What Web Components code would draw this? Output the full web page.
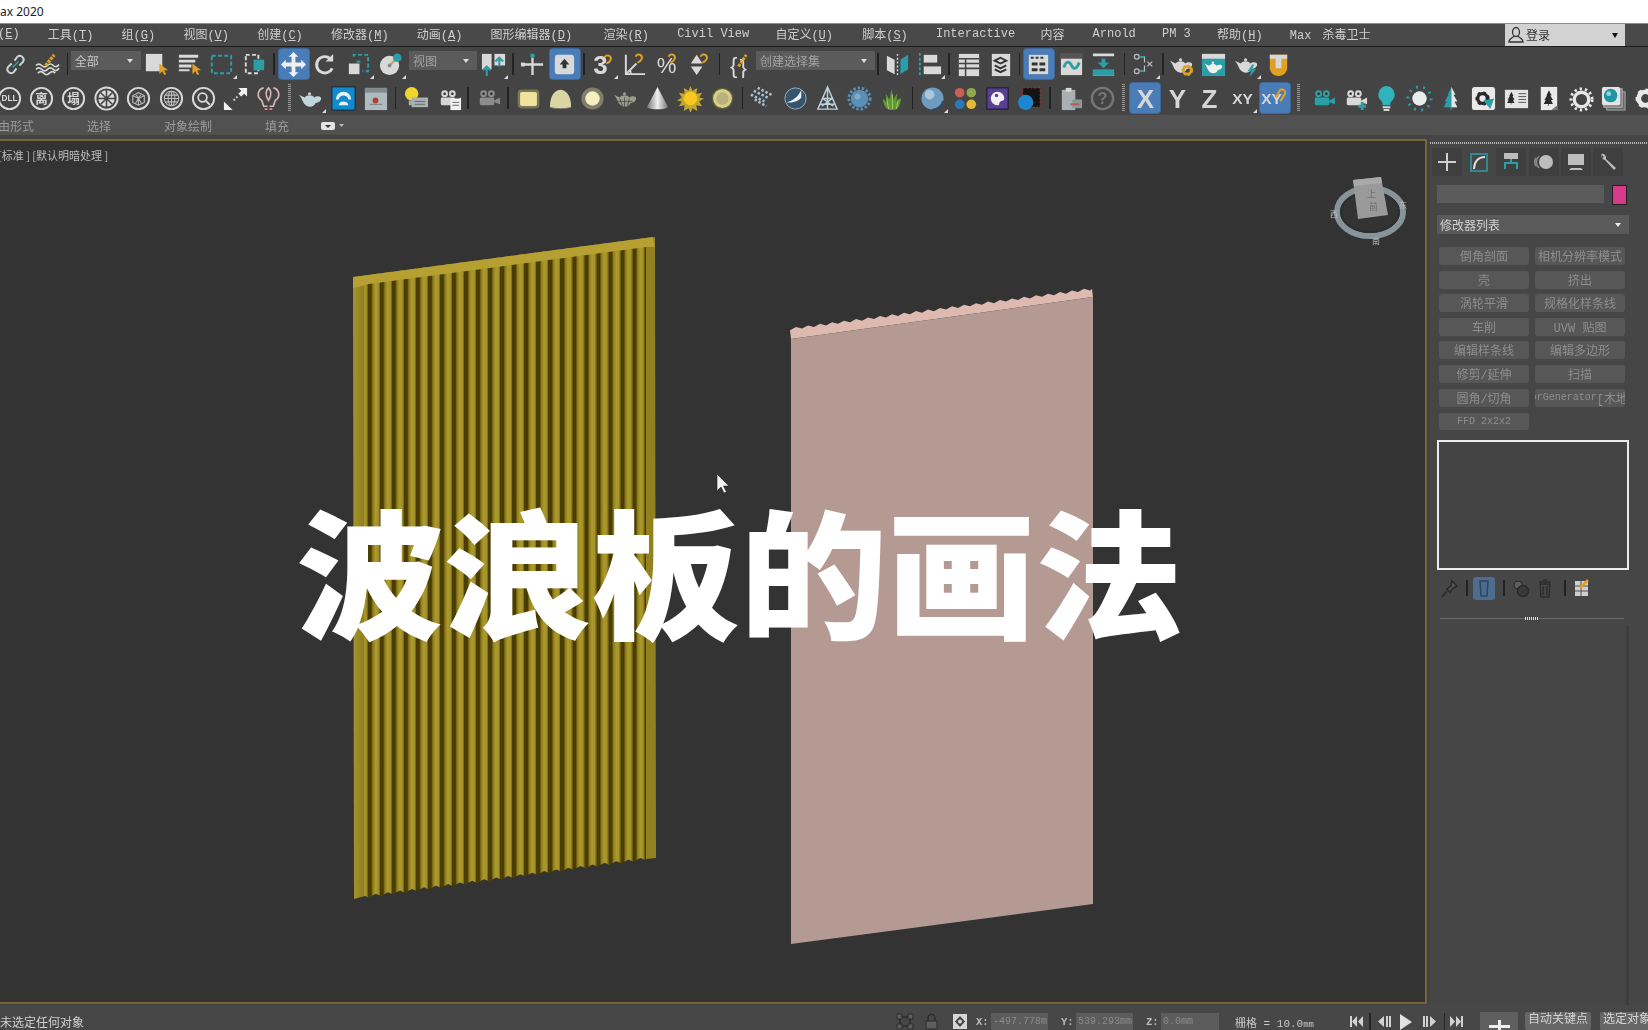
<!DOCTYPE html>
<html lang="zh">
<head>
<meta charset="utf-8">
<title>3ds Max 2020</title>
<style>
  html, body { margin: 0; height: 100%; overflow: hidden; background: #444; }
  body { font: 12px "Liberation Mono", "Noto Sans CJK SC", monospace; color: #ccc; }
  u { text-underline-offset: 1px; }
</style>
</head>
<body>
<max-app>
  <max-titlebar>ax 2020</max-titlebar>
  <max-menubar>
    <menu-item style="margin-left:-2px">(<u>E</u>)</menu-item>
    <menu-item>工具(<u>T</u>)</menu-item>
    <menu-item>组(<u>G</u>)</menu-item>
    <menu-item>视图(<u>V</u>)</menu-item>
    <menu-item>创建(<u>C</u>)</menu-item>
    <menu-item>修改器(<u>M</u>)</menu-item>
    <menu-item>动画(<u>A</u>)</menu-item>
    <menu-item>图形编辑器(<u>D</u>)</menu-item>
    <menu-item style="margin-left:3px">渲染(<u>R</u>)</menu-item>
    <menu-item>Civil View</menu-item>
    <menu-item style="margin-left:-2px">自定义(<u>U</u>)</menu-item>
    <menu-item style="margin-left:1px">脚本(<u>S</u>)</menu-item>
    <menu-item>Interactive</menu-item>
    <menu-item style="margin-left:-3px">内容</menu-item>
    <menu-item>Arnold</menu-item>
    <menu-item style="margin-left:-2px">PM 3</menu-item>
    <menu-item style="margin-left:-2px">帮助(<u>H</u>)</menu-item>
    <menu-item style="margin-left:-1px;word-spacing:4px">Max 杀毒卫士</menu-item>
    <login-box slot="end">登录</login-box>
  </max-menubar>
  <max-toolbar>
    <tool-row style="margin-left:-1px">
      <tool-icon n="link"></tool-icon><tool-icon n="wave"></tool-icon><tool-sep w="7"></tool-sep>
      <tool-combo w="70">全部</tool-combo>
      <tool-icon n="select"></tool-icon><tool-icon n="byname"></tool-icon><tool-icon n="region" fly></tool-icon><tool-icon n="crossing"></tool-icon><tool-sep w="7"></tool-sep>
      <tool-icon n="move" active></tool-icon><tool-icon n="rotate"></tool-icon><tool-icon n="scale" fly></tool-icon><tool-icon n="place" fly></tool-icon><tool-sep w="2" blank></tool-sep>
      <tool-combo w="68" dim>视图</tool-combo>
      <tool-icon n="pivot" fly></tool-icon><tool-sep w="7"></tool-sep>
      <tool-icon n="manip"></tool-icon><tool-icon n="key" active></tool-icon><tool-sep w="6"></tool-sep>
      <tool-icon n="snap" fly></tool-icon><tool-icon n="angle"></tool-icon><tool-icon n="percent"></tool-icon><tool-icon n="spin"></tool-icon><tool-sep w="6"></tool-sep>
      <tool-icon n="brace"></tool-icon><tool-sep w="1" blank></tool-sep>
      <tool-combo w="119" dim>创建选择集</tool-combo><tool-sep w="6"></tool-sep>
      <tool-icon n="mirror"></tool-icon><tool-icon n="align" fly></tool-icon><tool-sep w="6"></tool-sep>
      <tool-icon n="table"></tool-icon><tool-icon n="layers"></tool-icon><tool-sep w="6"></tool-sep>
      <tool-icon n="ribbon" active></tool-icon><tool-icon n="curve"></tool-icon><tool-icon n="schem"></tool-icon><tool-sep w="9"></tool-sep>
      <tool-icon n="nodes" fly></tool-icon><tool-sep w="4"></tool-sep>
      <tool-icon n="potgear"></tool-icon><tool-icon n="potwin"></tool-icon><tool-icon n="potbolt" fly></tool-icon><tool-icon n="ubadge"></tool-icon>
    </tool-row>
    <tool-row style="margin-left:-7px">
      <tool-icon n="dll"></tool-icon><tool-icon n="li"></tool-icon><tool-icon n="ta"></tool-icon><tool-icon n="wheel"></tool-icon><tool-icon n="mesh"></tool-icon><tool-icon n="globe"></tool-icon><tool-icon n="search"></tool-icon><tool-icon n="diag"></tool-icon><tool-icon n="bulbs"></tool-icon><tool-sep w="10" dots></tool-sep>
      <tool-icon n="pot" fly></tool-icon><tool-icon n="bluebox"></tool-icon><tool-icon n="redwin"></tool-icon><tool-sep w="8"></tool-sep>
      <tool-icon n="lamp"></tool-icon><tool-icon n="camdoc"></tool-icon><tool-sep w="7"></tool-sep>
      <tool-icon n="camgray"></tool-icon><tool-sep w="8"></tool-sep>
      <tool-icon n="ybox"></tool-icon><tool-icon n="dome"></tool-icon><tool-icon n="glow"></tool-icon><tool-icon n="potwire"></tool-icon><tool-icon n="cone"></tool-icon><tool-icon n="sun"></tool-icon><tool-icon n="olive"></tool-icon><tool-sep w="8"></tool-sep>
      <tool-icon n="grid"></tool-icon><tool-icon n="swoosh"></tool-icon><tool-icon n="tower"></tool-icon><tool-icon n="spiky"></tool-icon><tool-icon n="plant"></tool-icon><tool-sep w="8"></tool-sep>
      <tool-icon n="sphere" fly></tool-icon><tool-icon n="four"></tool-icon><tool-icon n="palette"></tool-icon><tool-icon n="redball"></tool-icon><tool-sep w="8"></tool-sep>
      <tool-icon n="clip"></tool-icon><tool-icon n="help"></tool-icon><tool-sep w="10" dots></tool-sep>
      <tool-icon n="x" active></tool-icon><tool-icon n="y"></tool-icon><tool-icon n="z"></tool-icon><tool-icon n="xy" fly></tool-icon><tool-icon n="xym" active></tool-icon><tool-sep w="15" dots></tool-sep>
      <tool-icon n="camt"></tool-icon><tool-icon n="camplus"></tool-icon><tool-icon n="bulbt"></tool-icon><tool-icon n="sunt"></tool-icon><tool-icon n="tree"></tool-icon><tool-icon n="gearcard"></tool-icon><tool-icon n="treecard"></tool-icon><tool-icon n="treedoc"></tool-icon><tool-icon n="ring"></tool-icon><tool-icon n="stack"></tool-icon><tool-icon n="gearpart"></tool-icon>
    </tool-row>
  </max-toolbar>
  <max-ribbon>
    <span style="margin-left:-2px">由形式</span><span>选择</span><span>对象绘制</span><span>填充</span>
    <ribbon-more></ribbon-more>
  </max-ribbon>
  <max-main>
    <max-viewport>
      <wave-scene></wave-scene>
      <view-label slot="over">[标准 ] [默认明暗处理 ]</view-label>
      <video-title slot="over">波浪板的画法</video-title>
    </max-viewport>
    <command-panel>
      <mod-button>倒角剖面</mod-button><mod-button>相机分辨率模式</mod-button>
      <mod-button>壳</mod-button><mod-button>挤出</mod-button>
      <mod-button>涡轮平滑</mod-button><mod-button>规格化样条线</mod-button>
      <mod-button>车削</mod-button><mod-button>UVW 贴图</mod-button>
      <mod-button>编辑样条线</mod-button><mod-button>编辑多边形</mod-button>
      <mod-button>修剪/延伸</mod-button><mod-button>扫描</mod-button>
      <mod-button>圆角/切角</mod-button><mod-button><span style="font-size:10px">FloorGenerator</span>[木地板]</mod-button>
      <mod-button style="font-size:10px;margin-top:1px">FFD 2x2x2</mod-button>
    </command-panel>
  </max-main>
  <status-bar>
    未选定任何对象
    <status-tools slot="end"></status-tools>
  </status-bar>
</max-app>

<script>
const W = "#d9d9d9", T = "#2c9ea8", O = "#dfa024", D = "#2a2a2a";

const pot = (c) => `<path fill="${c}" d="M2 10l6 3c2-3 8-3 10 0 2-2 7-2 7 1 0 3-3 4-6 5-1 4-8 5-11 1C6 18 5 13 2 10z"/><circle cx="13" cy="9" r="1.6" fill="${c}"/>`;
const cam = (c) => `<g fill="${c}"><circle cx="10" cy="9" r="3.5"/><circle cx="18" cy="9" r="3.5"/><rect x="6" y="13" width="15" height="8" rx="1.5"/><path d="M21 16l6-3v7l-6-2z"/></g><circle cx="10" cy="9" r="1.3" fill="${D}"/><circle cx="18" cy="9" r="1.3" fill="${D}"/>`;
const ringText = (t, s) => `<circle cx="14" cy="14" r="11" fill="none" stroke="${W}" stroke-width="2"/><text x="14" y="${14 + s * .38}" font-size="${s}" font-weight="700" text-anchor="middle" fill="${W}" font-family="Noto Sans CJK SC">${t}</text>`;
const letter = (t, s) => `<text x="14" y="${14 + s * .37}" font-size="${s}" font-weight="700" text-anchor="middle" fill="#d6d6d6" font-family="Liberation Sans">${t}</text>`;
const magnet = (x, y) => `<path d="M${x} ${y + 7}c5-2 6-6 3-8-2-1-4 0-5 2" fill="none" stroke="${O}" stroke-width="2"/>`;
const arrow = (x, y) => `<path fill="${O}" d="M${x} ${y}v11l3-3 2 4 2-1-2-4h4z"/>`;
const dash = (x, y, w, h, c) => `<rect x="${x}" y="${y}" width="${w}" height="${h}" fill="none" stroke="${c}" stroke-width="2" stroke-dasharray="4 2.5"/>`;
const tree = (c) => `<path fill="${c}" d="M14 2l4 8h-2l4 7h-3l3 6h-6v3h-1v-3H6l3-6H7l4-7h-1z"/>`;
const gear = (c, cx, cy, r) => `<circle cx="${cx}" cy="${cy}" r="${r}" fill="none" stroke="${c}" stroke-width="${r * .7}"/><circle cx="${cx}" cy="${cy}" r="${r * 1.28}" fill="none" stroke="${c}" stroke-width="${r * .4}" stroke-dasharray="${r * .6} ${r * .6}"/>`;

const ICONS = {
  link: `<g fill="none" stroke="#cdd5d5" stroke-width="2"><path d="M13 10l3-4a4 4 0 0 1 6 5l-4 4"/><path d="M15 18l-3 4a4 4 0 0 1-6-5l4-4"/></g><path d="M11 17l6-6" stroke="${T}" stroke-width="1.5"/>`,
  wave: `<g fill="none" stroke="${W}" stroke-width="1.7"><path d="M2 15q3-3 6 0t6 0 6 0 6-1"/><path d="M2 19q3-3 6 0t6 0 6 0 6-1"/><path d="M4 23q3-3 6 0t6 0 6 0"/></g><path d="M12 15l9-11" stroke="${O}" stroke-width="3.4" stroke-dasharray="3 1"/>`,
  select: `<rect x="3" y="3" width="17" height="18" fill="${W}"/>` + arrow(17, 13),
  byname: `<path fill="${W}" d="M3 4h20v3H3zM3 9h17v3H3zM3 14h13v3H3zM3 19h11v2H3z"/>` + arrow(17, 13),
  region: dash(4, 5, 20, 18, T),
  crossing: dash(5, 4, 13, 19, W) + `<rect x="13" y="9" width="11" height="11" fill="${T}"/>`,
  move: `<path fill="#f0f0f0" d="M14 1l5 5h-3v6h6V9l5 5-5 5v-3h-6v6h3l-5 5-5-5h3v-6H6v3l-5-5 5-5v3h6V6H9z"/>`,
  rotate: `<path d="M21 18a8.5 8.5 0 1 1-2-10" fill="none" stroke="${W}" stroke-width="3"/><path fill="${W}" d="M22 3v8h-8z"/>`,
  scale: `<path d="M9 6V4h15v17h-6" fill="none" stroke="${T}" stroke-width="2" stroke-dasharray="4 2.5"/><path d="M16 11h-4" stroke="${T}" stroke-width="2"/><rect x="4" y="13" width="11" height="11" fill="${W}"/>`,
  place: `<circle cx="13" cy="15" r="10" fill="${W}"/><path d="M13 15l8-8" stroke="${O}" stroke-width="2.4"/><circle cx="21" cy="7" r="4.5" fill="${T}"/><circle cx="13" cy="15" r="2" fill="#8a8a8a"/>`,
  pivot: `<rect x="2" y="3" width="10" height="16" fill="${W}"/><rect x="15" y="3" width="11" height="12" fill="${W}"/><path d="M7 26v-9M3 20l4-4 4 4M20 16v-9M16 11l4-4 4 4" fill="none" stroke="${T}" stroke-width="2.2"/>`,
  manip: `<path d="M14 3v22M3 14h22" stroke="${W}" stroke-width="2.4"/><circle cx="14" cy="5" r="2.4" fill="${T}"/><rect x="2" y="12" width="4" height="4" fill="${W}"/>`,
  key: `<rect x="4" y="4" width="20" height="20" rx="3" fill="#d8d8d8"/><path d="M14 8l5 6h-3v4h-4v-4H9z" fill="#333"/>`,
  snap: `<text x="11" y="24" font-size="27" font-weight="700" text-anchor="middle" fill="${W}" font-family="Liberation Sans">3</text>` + magnet(17, 6),
  angle: `<path d="M4 4v20h20M4 24L15 13M9 24a8 8 0 0 0-1-5" fill="none" stroke="${W}" stroke-width="2"/>` + magnet(16, 5),
  percent: `<text x="12" y="23" font-size="23" text-anchor="middle" fill="${W}" font-family="Liberation Sans">%</text>` + magnet(16, 5),
  spin: `<path fill="${W}" d="M10 4l6 9H4zM10 25l6-9H4z"/>` + magnet(16, 5),
  brace: `<text x="9" y="23" font-size="23" text-anchor="middle" fill="${W}" font-family="Liberation Sans">{</text><text x="19" y="25" font-size="23" text-anchor="middle" fill="${W}" font-family="Liberation Sans">}</text><path d="M14 16l8-12" stroke="${O}" stroke-width="3" stroke-dasharray="3 1"/>`,
  mirror: `<path fill="${W}" d="M3 5l8 4v15l-8-4z"/><path fill="${T}" d="M25 4l-8 5v15l8-5z"/><path d="M14 3v23" stroke="${W}" stroke-dasharray="2 2" stroke-width="1.5"/>`,
  align: `<path d="M4 2v24" stroke="${T}" stroke-width="2" stroke-dasharray="3 2"/><rect x="8" y="4" width="14" height="8" fill="${W}"/><rect x="8" y="16" width="18" height="8" fill="${W}"/>`,
  table: `<rect x="4" y="3" width="21" height="23" fill="${W}"/><path d="M4 8h21M4 13h21M4 18h21M11 8v18" stroke="#444" stroke-width="1.6"/>`,
  layers: `<rect x="5" y="3" width="19" height="23" fill="${W}"/><path d="M8 10l6-3 6 3-6 3zM8 15l6 3 6-3M8 19l6 3 6-3" fill="none" stroke="#333" stroke-width="2"/>`,
  ribbon: `<rect x="4" y="4" width="20" height="20" fill="${W}"/><path fill="#333" d="M6 6h3v2H6zM11 6h3v2h-3zM16 6h3v2h-3zM7 12h6v3H7zM15 12h6v3h-6zM7 18h6v3H7zM15 18h6v3h-6z"/>`,
  curve: `<rect x="3" y="3" width="22" height="22" fill="${W}"/><rect x="3" y="3" width="22" height="5" fill="#555"/><path d="M6 17c3-8 6-6 8-2s5 5 8-3" fill="none" stroke="${T}" stroke-width="3"/>`,
  schem: `<path d="M3 4h22M3 24h22" stroke="${W}" stroke-width="3"/><rect x="3" y="19" width="22" height="6" fill="${T}"/><path fill="${T}" d="M12 8h4v4h4l-6 6-6-6h4z"/>`,
  nodes: `<g fill="none" stroke="#bdbdbd" stroke-width="1.3"><circle cx="6" cy="6" r="2.5"/><circle cx="6" cy="21" r="2.5"/><path d="M9 6h5v6M9 21h5v-6"/><path d="M17 11l5 5M22 11l-5 5"/></g><path d="M9 6h5M9 21h5" stroke="${T}" stroke-width="1.5"/>`,
  potgear: pot(W) + gear(O, 20, 20, 4),
  potwin: `<rect x="2" y="3" width="24" height="23" fill="${T}"/><rect x="2" y="3" width="24" height="5" fill="${W}"/>` + pot("#f0f0f0").replace("<path", `<path transform="translate(3 5) scale(.8)"`).replace("<circle", `<circle transform="translate(3 5) scale(.8)"`),
  potbolt: pot(W) + `<path fill="${T}" d="M20 14l-5 7h4l-2 6 7-8h-4l2-5z"/>`,
  ubadge: `<path d="M5 4h18v14a9 8 0 0 1-18 0z" fill="${O}"/><path d="M5 4h18v4h-6v10h-6V8H5z" fill="#d8d8d8"/>`,
  dll: `<circle cx="14" cy="14" r="11" fill="none" stroke="${W}" stroke-width="2"/><text x="14" y="17" font-size="8.5" font-weight="700" text-anchor="middle" fill="${W}" font-family="Liberation Sans">DLL</text>`,
  li: ringText("离", 13),
  ta: ringText("塌", 13),
  wheel: `<circle cx="14" cy="14" r="11.5" fill="none" stroke="${W}" stroke-width="2"/><circle cx="14" cy="14" r="8.5" fill="${W}"/><path d="M14 5v18M5 14h18M8 8l12 12M20 8L8 20" stroke="#444" stroke-width="1.6"/>`,
  mesh: `<circle cx="14" cy="14" r="11" fill="none" stroke="${W}" stroke-width="2"/><g fill="none" stroke="#bdbdbd" stroke-width="1.1"><path d="M8 11l6-3 6 3v7l-6 3-6-3zM8 11l6 3 6-3M14 14v7M11 9l6 10M17 9l-6 10"/></g>`,
  globe: `<circle cx="14" cy="14" r="11" fill="none" stroke="${W}" stroke-width="2"/><g fill="none" stroke="#bdbdbd" stroke-width="1.1"><circle cx="14" cy="14" r="7.5"/><ellipse cx="14" cy="14" rx="3.5" ry="7.5"/><path d="M6.5 14h15M7.5 10.5h13M7.5 17.5h13M14 6.5v15"/></g>`,
  search: `<circle cx="14" cy="14" r="11" fill="none" stroke="${W}" stroke-width="2"/><circle cx="13" cy="13" r="4.5" fill="none" stroke="${W}" stroke-width="1.8"/><path d="M16.5 16.5l4 4" stroke="${W}" stroke-width="2"/>`,
  diag: `<path fill="#f2f2f2" d="M17 3h9v9l-3-3-3 3-3-3 3-3zM2 17l9 9H2z"/><path d="M12 16l4-4" stroke="${W}" stroke-width="2" stroke-dasharray="2 2"/>`,
  bulbs: `<g fill="none" stroke="#d6b7bb" stroke-width="1.7"><path d="M9 3a7 7 0 0 0-2 13l2 6h4"/><path d="M19 3a7 7 0 0 1 2 13l-2 6h-4"/><path d="M14 3c-3 3-3 8 0 13 3-5 3-10 0-13z"/></g><path d="M10 25h3M15 25h3" stroke="#dd8b99" stroke-width="2"/>`,
  pot: pot("#c2d6de"),
  bluebox: `<rect x="2" y="2" width="24" height="24" fill="#118ad0" stroke="#12283a"/><path d="M6 15a8 8 0 0 1 16 0h-3a5 4 0 0 0-10 0z" fill="#e8f4fa"/><path d="M9 21a5 4 0 0 1 10 0z" fill="#e8f4fa"/>`,
  redwin: `<rect x="3" y="3" width="23" height="23" fill="#aebcc2"/><rect x="3" y="3" width="23" height="5" fill="#828c90"/><circle cx="14" cy="16" r="3" fill="#b93a2e"/><path d="M8 20h13" stroke="#777"/>`,
  lamp: `<circle cx="10" cy="9" r="7" fill="#f1d52e"/><rect x="7" y="16" width="6" height="5" fill="#aaa"/><rect x="10" y="13" width="17" height="10" fill="#a9b1b3"/><path d="M13 17h11M13 20h11" stroke="#666"/>`,
  camdoc: cam("#d5d5d5") + `<rect x="16" y="14" width="11" height="12" fill="#f0f0f0"/><path d="M18 18h7M18 21h7" stroke="#666"/>`,
  camgray: cam("#8b8b8b"),
  ybox: `<rect x="4" y="6" width="20" height="17" rx="3" fill="#efe29a" stroke="#77775a" stroke-width="2.5"/>`,
  dome: `<path d="M3 23C3 10 9 5 14 5s11 5 11 18c-5 2-17 2-22 0z" fill="#d9d6a4"/><path d="M3 23c5 2 17 2 22 0" stroke="#777" fill="none"/>`,
  glow: `<circle cx="14" cy="14" r="11.5" fill="#7f7f6a"/><circle cx="14" cy="14" r="7.5" fill="#f7f0c0"/>`,
  potwire: pot("#9c9c8a") + `<path d="M8 14l3 8M13 13v10M18 14l-2 8M6 17h15" stroke="#444" stroke-width=".8"/>`,
  cone: `<defs><linearGradient id="g"><stop offset="0" stop-color="#777"/><stop offset=".5" stop-color="#eee"/><stop offset="1" stop-color="#777"/></linearGradient></defs><path d="M14 2l11 21c-6 3-16 3-22 0z" fill="url(#g)"/>`,
  sun: `<path d="M14 1l2 5 5-3-1 6 6-1-3 5 5 1-5 3 3 5-6-1 1 6-5-3-2 5-2-5-5 3 1-6-6 1 3-5-5-1 5-3-3-5 6 1-1-6 5 3z" fill="#c2a62e"/><circle cx="14" cy="14" r="7" fill="#f8c820"/>`,
  olive: `<circle cx="14" cy="14" r="10.5" fill="#d8cf8d" stroke="#5f5c3c" stroke-width="1.5"/><circle cx="14" cy="14" r="6.5" fill="#b9b27a"/>`,
  grid: `<g stroke="#a9c3d4" stroke-width="2.6" stroke-dasharray="2.5 2" fill="none"><path d="M2 10l14 7M5 6l16 8M9 3l16 8M6 15l12 7"/></g>`,
  swoosh: `<circle cx="14" cy="14" r="11" fill="#35556f" stroke="#9cb0bd"/><path d="M20 5C17 12 12 16 5 18c5 1 12-1 15-5z" fill="#f0f0f0"/>`,
  tower: `<path d="M14 2L4 25h20zM9 14h10M6.500 20h15M14 2v23M9 14l11 8M19 14L8 22" fill="none" stroke="#bcd0da" stroke-width="1.5"/>`,
  spiky: `<circle cx="14" cy="14" r="9" fill="#5b8fb5"/><circle cx="14" cy="14" r="11" fill="none" stroke="#5b8fb5" stroke-width="3" stroke-dasharray="2.5 2"/><circle cx="12" cy="12" r="3" fill="#82abc8"/>`,
  plant: `<path fill="#5f9a34" d="M14 26c-6 0-9-3-10-12l4 4-1-9 4 6 2-11 2 11 4-7-1 10 5-5c-1 9-3 13-9 13z"/><path d="M14 25V10M10 25L8 14M18 25l2-10" stroke="#a5c866"/>`,
  sphere: `<circle cx="14" cy="14" r="11.500" fill="#6d9cc0"/><circle cx="11" cy="10" r="5" fill="#a9c6da"/><path d="M14 25.500a11.500 11.500 0 0 0 11-9" stroke="#2c4a63" stroke-width="2" fill="none"/>`,
  four: `<circle cx="8" cy="8" r="5" fill="#c95f55"/><circle cx="20" cy="8" r="5" fill="#8fa84c"/><circle cx="8" cy="20" r="5" fill="#2f78b8"/><circle cx="20" cy="20" r="5" fill="#e2bc37"/>`,
  palette: `<rect x="3" y="3" width="22" height="22" fill="#5a3f97" stroke="#161629"/><path d="M14 7a7 7 0 1 0 0 14c3 0 1-3 3-4 3-1 4-1 4-3a7 7 0 0 0-7-7z" fill="#f2f2f2"/><circle cx="13" cy="11" r="1.800" fill="#5a3f97"/>`,
  redball: `<rect x="7" y="3" width="18" height="20" fill="#141414" stroke="#c62e2e" stroke-dasharray="2 2"/><circle cx="10" cy="18" r="8" fill="#1e86cf"/>`,
  clip: `<rect x="5" y="5" width="14" height="21" fill="#a9b0b2"/><rect x="9" y="3" width="6" height="4" fill="#d8d8d8"/><rect x="16" y="15" width="10" height="9" fill="#8f9699"/><path d="M14 20h9" stroke="#b35a5a" stroke-width="2"/>`,
  help: `<circle cx="14" cy="14" r="11" fill="none" stroke="#767676" stroke-width="2.500"/><text x="14" y="20" font-size="17" font-weight="700" text-anchor="middle" fill="#767676" font-family="Liberation Sans">?</text>`,
  x: letter("X", 27),
  y: letter("Y", 27),
  z: letter("Z", 27),
  xy: letter("XY", 16),
  xym: letter("XY", 16).replace('x="14"', 'x="11"') + `<path d="M15 13l5-8a3.500 3.500 0 0 1 5 4l-5 8" fill="none" stroke="${O}" stroke-width="2.200"/>`,
  camt: cam(T),
  camplus: cam(W) + `<path d="M22 18v8M18 22h8" stroke="${T}" stroke-width="3"/>`,
  bulbt: `<path d="M14 1a9 9 0 0 0-5 16c1 1 1 3 1 4h8c0-1 0-3 1-4a9 9 0 0 0-5-16z" fill="#2fb4bd"/><path d="M10 23h8M11 26h6" stroke="#d8d8d8" stroke-width="2"/>`,
  sunt: `<circle cx="14" cy="14" r="7.500" fill="#e8eeee"/><circle cx="14" cy="14" r="12" fill="none" stroke="#2c9ea8" stroke-width="3" stroke-dasharray="2 5.500"/>`,
  tree: tree(T) + `<path d="M14 2l4 8h-2l4 7h-3l3 6h-6z" fill="#e6e6e6"/>`,
  gearcard: `<rect x="2" y="2" width="24" height="24" rx="3" fill="#e9e9e9"/>` + gear(D, 13, 14, 5) + `<path d="M14 16l11-2-4 11z" fill="${T}"/>`,
  treecard: `<rect x="2" y="5" width="24" height="19" fill="#e4e4e4"/><g transform="translate(1 6) scale(.55)">${tree(D)}</g><path d="M16 9h8M16 12h8M16 15h8M16 18h8" stroke="#555"/>`,
  treedoc: `<path d="M6 2h17v24H6z" fill="#eaeaea"/><g transform="translate(5 4) scale(.68)">${tree(D)}</g><path d="M17 26l6-5v5z" fill="#777"/>`,
  ring: `<circle cx="14" cy="15" r="7.500" fill="none" stroke="#e8e8e8" stroke-width="3.500"/><circle cx="14" cy="15" r="11" fill="none" stroke="#e8e8e8" stroke-width="3" stroke-dasharray="2.500 3"/>`,
  stack: `<rect x="7" y="7" width="19" height="19" fill="#666" stroke="#aaa"/><rect x="4" y="4" width="19" height="19" fill="#777" stroke="#bbb"/><rect x="2" y="2" width="19" height="19" rx="2" fill="#e4e4e4"/><circle cx="11" cy="11" r="7" fill="#1f95a3"/><circle cx="9" cy="9" r="2.500" fill="#8ed5dc"/>`,
  gearpart: gear("#e8e8e8", 14, 14, 7)
};

class MaxApp extends HTMLElement {
  constructor() {
    super();
    this.attachShadow({ mode: "open" });
    this.shadowRoot.innerHTML = `<style>
      :host { display: flex; flex-direction: column; width: 1648px; height: 1030px; overflow: hidden; }
    </style><slot></slot>`;
  }
}

class MaxTitlebar extends HTMLElement {
  constructor() {
    super();
    this.attachShadow({ mode: "open" });
    this.shadowRoot.innerHTML = `<style>
      :host { display: flex; align-items: center; height: 23px; flex: none; background: #fff; color: #222;
        font: 12px "Noto Sans", "Noto Sans CJK SC", sans-serif; padding-bottom: 1px; box-sizing: border-box; }
    </style><slot></slot>`;
  }
}

class MaxMenubar extends HTMLElement {
  constructor() {
    super();
    this.attachShadow({ mode: "open" });
    this.shadowRoot.innerHTML = `<style>
      :host { display: flex; height: 24px; flex: none; box-sizing: border-box; background: #494949; color: #cfcfcf;
        border-top: 1px solid #8d8d8d; border-bottom: 1px solid #1d1d1d; filter: blur(.4px); }
      .items { display: flex; align-items: center; gap: 28.2px; flex: 1; white-space: nowrap; padding-bottom: 3px; }
    </style><div class="items"><slot></slot></div><slot name="end"></slot>`;
  }
}

class MenuItem extends HTMLElement {
  constructor() {
    super();
    this.attachShadow({ mode: "open" });
    this.shadowRoot.innerHTML = `<style>:host { display: block; flex: none; }</style><slot></slot>`;
  }
}

class LoginBox extends HTMLElement {
  constructor() {
    super();
    this.attachShadow({ mode: "open" });
    this.shadowRoot.innerHTML = `<style>
      :host { display: flex; align-items: center; width: 120px; height: 22px; margin-right: 23px; background: #d2d2d2; color: #333;
        padding: 0 7px 0 2px; box-sizing: border-box; flex: none; }
      svg { flex: none; margin-right: 1px; }
      span { flex: 1; }
      i { width: 0; border: 3.5px solid transparent; border-top: 5px solid #111; margin-top: 4px; }
    </style>
    <svg width="18" height="18" viewBox="0 0 18 18" fill="none" stroke="#333" stroke-width="1.300"><ellipse cx="9" cy="6" rx="3.500" ry="4.500"/><path d="M7 10c-1 2-5 2-5 6h14c0-4-4-4-5-6"/></svg>
    <span><slot></slot></span><i></i>`;
  }
}

class MaxToolbar extends HTMLElement {
  constructor() {
    super();
    this.attachShadow({ mode: "open" });
    this.shadowRoot.innerHTML = `<style>
      :host { display: flex; flex-direction: column; gap: 4px; padding: 2px 0; height: 68px; box-sizing: border-box;
        flex: none; background: #444; overflow: hidden; filter: blur(.35px); }
    </style><slot></slot>`;
  }
}

class ToolRow extends HTMLElement {
  constructor() {
    super();
    this.attachShadow({ mode: "open" });
    this.shadowRoot.innerHTML = `<style>
      :host { display: flex; height: 30px; flex: none; white-space: nowrap; }
    </style><slot></slot>`;
  }
}

class ToolIcon extends HTMLElement {
  connectedCallback() {
    if (this.shadowRoot) return;
    this.attachShadow({ mode: "open" });
    const fly = this.hasAttribute("fly") ? `<b></b>` : "";
    this.shadowRoot.innerHTML = `<style>
      :host { display: flex; align-items: center; justify-content: center; position: relative; width: 32.4px; height: 30px; flex: none; }
      :host([active]) .box { background: #4a7db8; border-radius: 3px; box-shadow: 0 0 0 1px #3c6798; }
      .box { display: flex; align-items: center; justify-content: center; width: 30px; height: 30px; }
      b { position: absolute; right: 1px; bottom: 0; width: 0; border: 2.5px solid transparent; border-right-color: #ddd; border-bottom-color: #ddd; }
    </style><div class="box"><svg width="27" height="27" viewBox="0 0 28 28">${ICONS[this.getAttribute("n")] || ""}</svg></div>${fly}`;
  }
}

class ToolSep extends HTMLElement {
  connectedCallback() {
    if (this.shadowRoot) return;
    this.attachShadow({ mode: "open" });
    const line = this.hasAttribute("blank") ? "" : "<i></i>";
    this.shadowRoot.innerHTML = `<style>
      :host { display: flex; justify-content: center; align-items: center; height: 30px; width: ${this.getAttribute("w")}px; flex: none; }
      i { display: block; width: 1.500px; height: 22px; background: #222; }
      :host([dots]) i { height: 28px; width: 3px; background: repeating-linear-gradient(#9a9a9a 0 1px, #444 1px 2px); }
    </style>${line}`;
  }
}

class ToolCombo extends HTMLElement {
  connectedCallback() {
    if (this.shadowRoot) return;
    this.attachShadow({ mode: "open" });
    this.shadowRoot.innerHTML = `<style>
      :host { display: flex; align-items: center; justify-content: space-between; width: ${this.getAttribute("w")}px; height: 19px;
        margin-top: 2px; padding: 0 8px 0 4px; box-sizing: border-box; background: #5b5b5b; color: #c8c8c8; flex: none; }
      :host([dim]) { color: #a2a2a2; }
      i { width: 0; border: 3px solid transparent; border-top: 4px solid #ddd; margin-top: 4px; }
    </style><span><slot></slot></span><i></i>`;
  }
}

class MaxRibbon extends HTMLElement {
  constructor() {
    super();
    this.attachShadow({ mode: "open" });
    this.shadowRoot.innerHTML = `<style>
      :host { display: flex; align-items: center; gap: 53px; height: 20px; flex: none; background: #515151; color: #9c9c9c;
        font-size: 12px; filter: blur(.4px); padding-top: 2px; box-sizing: border-box; }
    </style><slot></slot>`;
  }
}

class RibbonMore extends HTMLElement {
  constructor() {
    super();
    this.attachShadow({ mode: "open" });
    this.shadowRoot.innerHTML = `<style>
      :host { display: flex; align-items: center; gap: 4px; margin-left: -21px; }
    </style>
    <svg width="14" height="9" viewBox="0 0 14 9"><rect width="14" height="8" rx="2" fill="#e4e4e4"/><path d="M4 3h6L7 6z" fill="#333"/></svg>
    <svg width="5" height="4" viewBox="0 0 5 4"><path d="M0 0h5L2.500 3z" fill="#bbb"/></svg>`;
  }
}

class MaxMain extends HTMLElement {
  constructor() {
    super();
    this.attachShadow({ mode: "open" });
    this.shadowRoot.innerHTML = `<style>
      :host { display: flex; flex: 1; min-height: 0; background: #424242; }
    </style><slot></slot>`;
  }
}

class MaxViewport extends HTMLElement {
  constructor() {
    super();
    this.attachShadow({ mode: "open" });
    this.shadowRoot.innerHTML = `<style>
      :host { display: block; position: relative; width: 1427px; height: 865px; margin-top: 4px; box-sizing: border-box; flex: none;
        background: #333; border: 2px solid #75663a; border-left: 0; overflow: hidden; }
    </style><slot></slot><slot name="over"></slot>`;
  }
}

class WaveScene extends HTMLElement {
  constructor() {
    super();
    this.attachShadow({ mode: "open" });
    this.shadowRoot.innerHTML = `<style>
      :host { display: block; position: absolute; inset: 0; }
      svg { display: block; filter: blur(.5px); }
    </style>${this.draw()}`;
  }

  draw() {
    // ribbed panel: top edge 277..237, bottom edge 898..858 over x 353..655
    const topY = (x) => 277 - (x - 353) * 40 / 300;
    const botY = (x) => 899 - (x - 353) * 41 / 302;
    const period = 12.03;
    let teeth = "";
    for (let i = 23; i >= 0; i--) {
      const x = 364 + period * i;
      teeth += `${x + 9},${botY(x + 9) - 1} ${x + 5},${botY(x + 5) + 1} ${x},${botY(x) - 2} `;
    }
    const ribs = `364,${topY(364)} 648,${topY(648)} ${teeth} 364,${botY(364)}`;

    // top of the pink panel has a soft scallop
    let scallop = "";
    for (let x = 790; x < 1092; x += 6) {
      const t = (x - 790) / 302;
      const y = 329 - t * 40 + (Math.round((x - 790) / 6) % 2 ? -1.200 : 1.200);
      scallop += `${x},${y} `;
    }

    return `<svg width="1425" height="861" viewBox="0 141 1425 861">
      <defs>
        <linearGradient id="rib" gradientUnits="userSpaceOnUse" x1="368" y1="0" x2="380.030" y2="0" spreadMethod="repeat">
          <stop offset="0" stop-color="#4a3d02"/><stop offset=".26" stop-color="#4a3d02"/>
          <stop offset=".4" stop-color="#8b7a1c"/><stop offset=".62" stop-color="#ad9a2b"/>
          <stop offset=".85" stop-color="#a4922a"/><stop offset="1" stop-color="#6a5a10"/>
        </linearGradient>
        <linearGradient id="edge"><stop offset="0" stop-color="#a6932a"/><stop offset="1" stop-color="#8e7d1e"/></linearGradient>
      </defs>
      <polygon points="353,277 365,276 365,896 354,899" fill="url(#edge)"/>
      <polygon points="${ribs}" fill="url(#rib)"/>
      <polygon points="646,238 655,237 656,858 646,859" fill="#93811f"/>
      <polygon points="353,277 653,237 655,247 646,247 369,284 353,288" fill="#b5a031"/>
      <polygon points="${scallop} 1092,289 1093,297 791,339" fill="#deb9af"/>
      <polygon points="791,339 1093,297 1093,904 791,944" fill="#b59a94"/>
      <g transform="translate(1370 210)" style="filter: blur(.7px)">
        <ellipse cy="2" rx="33" ry="24" fill="none" stroke="#87949a" stroke-width="6"/>
        <ellipse cy="2" rx="29" ry="20" fill="none" stroke="#2b2d2e" stroke-width="2"/>
        <polygon points="-17,-30 11,-33 18,5 -12,9" fill="#9a9a9a"/>
        <polygon points="-17,-30 11,-33 12,-27 -16,-24" fill="#a8a8a8"/>
        <text x="-3" y="-13" font-size="9" fill="#6d6d6d" font-family="Noto Sans CJK SC">上</text>
        <text x="-1" y="0" font-size="9" fill="#6d6d6d" font-family="Noto Sans CJK SC">前</text>
        <text x="-40" y="7" font-size="8" fill="#c0c0c0" font-family="Noto Sans CJK SC">西</text>
        <text x="29" y="-2" font-size="8" fill="#c0c0c0" font-family="Noto Sans CJK SC">东</text>
        <text x="2" y="34" font-size="8" fill="#c0c0c0" font-family="Noto Sans CJK SC">南</text>
      </g>
      <path d="M717 474v17l4-4 3 6 2.500-1-3-6h5.500z" fill="#f4f4f4" stroke="#222" stroke-width=".6"/>
    </svg>`;
  }
}

class ViewLabel extends HTMLElement {
  constructor() {
    super();
    this.attachShadow({ mode: "open" });
    this.shadowRoot.innerHTML = `<style>
      :host { display: block; position: absolute; left: -2px; top: 6px; font: 11px "Noto Sans CJK SC", sans-serif; color: #bdbdbd; white-space: pre; filter: blur(.3px); }
    </style><slot></slot>`;
  }
}

class VideoTitle extends HTMLElement {
  constructor() {
    super();
    this.attachShadow({ mode: "open" });
    this.shadowRoot.innerHTML = `<style>
      :host { display: block; position: absolute; left: 296px; top: 344px; white-space: nowrap; color: #fff;
        font: 900 147px/1.2 "Noto Sans CJK SC", sans-serif; transform: scale(1.006, .94); transform-origin: 0 0; }
    </style><slot></slot>`;
  }
}

class CommandPanel extends HTMLElement {
  constructor() {
    super();
    this.attachShadow({ mode: "open" });
    const tabs = [
      `<path d="M11 2v18M2 11h18" stroke="#cfcfcf" stroke-width="2"/>`,
      `<rect x="3" y="3" width="16" height="17" fill="none" stroke="${T}" stroke-width="1.500"/><path d="M6 18C6 11 10 6 17 6" fill="none" stroke="#ddd" stroke-width="2"/>`,
      `<rect x="4" y="2" width="14" height="6" fill="#bdbdbd"/><path d="M11 8v4M5 18v-6h12v6" fill="none" stroke="${T}" stroke-width="2"/>`,
      `<circle cx="13" cy="11" r="7" fill="#bdbdbd"/><path d="M6 5a8 8 0 0 0 0 12M3 7a7 7 0 0 0 0 8" fill="none" stroke="#8a8a8a" stroke-width="1.500"/>`,
      `<rect x="3" y="3" width="16" height="11" fill="#bdbdbd"/><path d="M6 17h10l2 2H4z" fill="#bdbdbd"/>`,
      `<path d="M5 3a4 4 0 0 0 3 6l9 10 2-2-10-9a4 4 0 0 0-5-5l3 3-2 1z" fill="#bdbdbd"/>`
    ];
    this.shadowRoot.innerHTML = `<style>
      :host { display: block; flex: 1; position: relative; background: #464646; padding-top: 7px; box-sizing: border-box;
        margin-left: 3px; filter: blur(.35px); color: #8c8c8c; }
      .dots { height: 2px; background: repeating-linear-gradient(90deg, #bbb 0 1px, #464646 1px 2px); }
      .tabs { display: flex; gap: 2.200px; margin: 4px 0 0 2px; }
      .tab { width: 30px; height: 28px; background: #3f3f3f; border-radius: 2px 2px 0 0; display: flex; align-items: center; justify-content: center; }
      .tab.on { background: #464646; }
      .name { display: flex; align-items: flex-start; gap: 8px; margin: 9px 0 0 7px; }
      .field { width: 167px; height: 18px; background: #5b5b5b; }
      .swatch { width: 15px; height: 20px; box-sizing: border-box; background: #d63a88; border: 1px solid #241c20; }
      .drop { display: flex; justify-content: space-between; align-items: center; width: 192px; height: 19px; margin: 10px 0 0 7px; padding: 0 8px 0 3px;
        box-sizing: border-box; background: #5a5a5a; color: #d2d2d2; }
      .drop i { width: 0; border: 3px solid transparent; border-top: 4px solid #eee; margin-top: 4px; }
      .mods { display: grid; grid-template-columns: 90px 90px; grid-auto-rows: 18px; gap: 5.600px 6px; margin: 13px 0 0 9px; }
      .stack { width: 192px; height: 130px; box-sizing: border-box; margin: 10px 0 0 7px; border: 2px solid #ececec; background: #444; }
      .tools { display: flex; align-items: center; height: 23px; margin: 7px 0 0 7px; position: relative; }
      .tools > * { position: absolute; top: 0; }
      .tools i { width: 1.500px; height: 16px; top: 3px; background: #222; }
      .tools .on { width: 22px; height: 23px; left: 36px; background: #4e6c8e; border-radius: 3px; }
      .div { position: relative; height: 1px; background: #6a6a6a; margin: 18px 0 0 10px; width: 184px; }
      .div b { position: absolute; left: 85px; top: -1px; width: 14px; height: 3px; background: repeating-linear-gradient(90deg, #ddd 0 1px, #464646 1px 2px); }
      .rail { position: absolute; left: 196px; top: 490px; bottom: 0; width: 3px; background: #3e3e3e; }
    </style>
    <div class="dots"></div>
    <div class="tabs">${tabs.map((t, i) => `<div class="tab${i == 1 ? " on" : ""}"><svg width="22" height="22" viewBox="0 0 22 22">${t}</svg></div>`).join("")}</div>
    <div class="name"><div class="field"></div><div class="swatch"></div></div>
    <div class="drop">修改器列表<i></i></div>
    <div class="mods"><slot></slot></div>
    <div class="stack"></div>
    <div class="tools">
      <svg style="left:3px" width="20" height="23" viewBox="0 0 20 23"><path d="M12 4l5 5-4 2-3 4-3-3 4-3zM7 14l-5 6" fill="#555" stroke="#2a2a2a" stroke-width="1.500"/></svg>
      <i style="left:29px"></i>
      <div class="on"></div>
      <svg style="left:40px" width="14" height="23" viewBox="0 0 14 23"><path d="M3 4h8l-1 15H4z" fill="none" stroke="#2d4560" stroke-width="1.500"/></svg>
      <i style="left:66px"></i>
      <svg style="left:74px" width="20" height="23" viewBox="0 0 20 23"><circle cx="7" cy="8" r="4" fill="#5f5f5f" stroke="#2a2a2a"/><circle cx="12" cy="14" r="5.500" fill="#3a3a3a" stroke="#2a2a2a" stroke-width="1.500"/></svg>
      <svg style="left:100px" width="16" height="23" viewBox="0 0 16 23"><path d="M3 7h10l-1 13H4zM2 5h12M6 3h4M6 9v9M10 9v9" fill="none" stroke="#2c2c2c" stroke-width="1.300"/></svg>
      <i style="left:127px"></i>
      <svg style="left:136px" width="18" height="23" viewBox="0 0 18 23"><rect x="2" y="4" width="13" height="15" fill="#cfcfcf"/><path d="M2 9h13M2 14h13M8 4v15" stroke="#555"/><path d="M7 11l8-8" stroke="${O}" stroke-width="2.500"/></svg>
    </div>
    <div class="div"><b></b></div>
    <div class="rail"></div>`;
  }
}

class ModButton extends HTMLElement {
  constructor() {
    super();
    this.attachShadow({ mode: "open" });
    this.shadowRoot.innerHTML = `<style>
      :host { display: flex; align-items: center; justify-content: center; overflow: hidden; white-space: nowrap; background: #575757;
        border-radius: 3px; color: #8e8e8e; font-size: 12px; }
    </style><slot></slot>`;
  }
}

class StatusBar extends HTMLElement {
  constructor() {
    super();
    this.attachShadow({ mode: "open" });
    this.shadowRoot.innerHTML = `<style>
      :host { display: flex; align-items: center; height: 25px; flex: none; box-sizing: border-box; padding-top: 8px;
        background: #474747; color: #d0d0d0; font-size: 12px; filter: blur(.35px); overflow: hidden; white-space: nowrap; }
      .left { flex: none; width: 896px; }
    </style><div class="left"><slot></slot></div><slot name="end"></slot>`;
  }
}

class StatusTools extends HTMLElement {
  constructor() {
    super();
    this.attachShadow({ mode: "open" });
    const field = (w, t) => `<span class="f" style="width:${w}px">${t}</span>`;
    this.shadowRoot.innerHTML = `<style>
      :host { display: flex; align-items: center; height: 17px; flex: none; }
      svg { flex: none; display: block; }
      .l { font-size: 10.500px; font-weight: 700; color: #bdbdbd; width: 15px; flex: none; }
      .f { flex: none; height: 17px; line-height: 17px; background: #5c5c5c; color: #8b8b8b; font-size: 10px; padding-left: 2px; box-sizing: border-box; overflow: hidden; }
      .g { color: #c8c8c8; font-size: 11px; flex: none; }
      .g small { font-size: 9px; }
      .s { width: 1.500px; height: 17px; background: #262626; flex: none; }
      .big { position: relative; width: 38px; height: 18px; background: #5f5f5f; flex: none; overflow: hidden; margin-top: -1px; }
      .big::before { content: ""; position: absolute; left: 18px; top: 8px; width: 3px; height: 14px; background: #eee; }
      .big::after { content: ""; position: absolute; left: 9px; top: 13px; width: 21px; height: 3px; background: #eee; }
      .b { flex: none; height: 18px; line-height: 17px; background: #666; color: #d4d4d4; padding: 0 3px; border-radius: 2px; box-sizing: border-box; overflow: hidden; margin-top: -1px; }
    </style>
    <svg width="18" height="17" viewBox="0 0 18 17"><rect x="4" y="4" width="10" height="9" fill="none" stroke="#2d2d2d" stroke-width="1.500"/><path d="M1 1h5v5H1zM12 1h5v5h-5zM1 11h5v5H1zM12 11h5v5h-5z" fill="#5d5d5d" stroke="#2d2d2d"/></svg>
    <svg style="margin-left:11px" width="13" height="17" viewBox="0 0 13 17"><path d="M3 8V5a3.500 3.500 0 0 1 7 0v3" fill="none" stroke="#2d2d2d" stroke-width="1.500"/><rect x="1" y="8" width="11" height="8" fill="#5d5d5d" stroke="#2d2d2d"/></svg>
    <svg style="margin-left:14px" width="16" height="17" viewBox="0 0 16 17"><rect x="1" y="1" width="14" height="15" fill="#d6d6d6"/><path d="M8 3l5 5.500-5 5.500-5-5.500z" fill="#444"/><circle cx="8" cy="8.500" r="2" fill="#d6d6d6"/></svg>
    <span class="l" style="margin-left:8px">X:</span>${field(57, "-497.778m")}
    <span class="l" style="margin-left:13px">Y:</span>${field(57, "539.293mm")}
    <span class="l" style="margin-left:13px">Z:</span>${field(58, "0.0mm")}
    <span class="g" style="margin-left:16px">栅格 = 10.0<small>mm</small></span>
    <svg style="margin-left:34px" width="16" height="17" viewBox="0 0 16 17"><path d="M2 3h2v11H2zM9 3v11L4 8.500zM15 3v11L10 8.500z" fill="#d2d2d2"/></svg>
    <div class="s" style="margin-left:5px"></div>
    <svg style="margin-left:5px" width="16" height="17" viewBox="0 0 16 17"><path d="M8 3v11L2 8.500zM10 3h2v11h-2zM13 3h2v11h-2z" fill="#d2d2d2"/></svg>
    <svg style="margin-left:6px" width="16" height="19" viewBox="0 0 16 19"><path d="M2 2l12 8L2 18z" fill="#e2e2e2"/></svg>
    <svg style="margin-left:8px" width="16" height="17" viewBox="0 0 16 17"><path d="M1 3h2v11H1zM4 3h2v11H4zM8 3l6 5.500L8 14z" fill="#d2d2d2"/></svg>
    <div class="s" style="margin-left:6px"></div>
    <svg style="margin-left:4px" width="16" height="17" viewBox="0 0 16 17"><path d="M1 3l5 5.500L1 14zM7 3l5 5.500L7 14zM12 3h2v11h-2z" fill="#d2d2d2"/></svg>
    <div class="big" style="margin-left:15px"></div>
    <span class="b" style="margin-left:7px;width:66px">自动关键点</span>
    <span class="b" style="margin-left:9px;width:50px">选定对象</span>`;
  }
}

customElements.define("max-app", MaxApp);
customElements.define("max-titlebar", MaxTitlebar);
customElements.define("max-menubar", MaxMenubar);
customElements.define("menu-item", MenuItem);
customElements.define("login-box", LoginBox);
customElements.define("max-toolbar", MaxToolbar);
customElements.define("tool-row", ToolRow);
customElements.define("tool-icon", ToolIcon);
customElements.define("tool-sep", ToolSep);
customElements.define("tool-combo", ToolCombo);
customElements.define("max-ribbon", MaxRibbon);
customElements.define("ribbon-more", RibbonMore);
customElements.define("max-main", MaxMain);
customElements.define("max-viewport", MaxViewport);
customElements.define("wave-scene", WaveScene);
customElements.define("view-label", ViewLabel);
customElements.define("video-title", VideoTitle);
customElements.define("command-panel", CommandPanel);
customElements.define("mod-button", ModButton);
customElements.define("status-bar", StatusBar);
customElements.define("status-tools", StatusTools);
</script>
</body>
</html>
